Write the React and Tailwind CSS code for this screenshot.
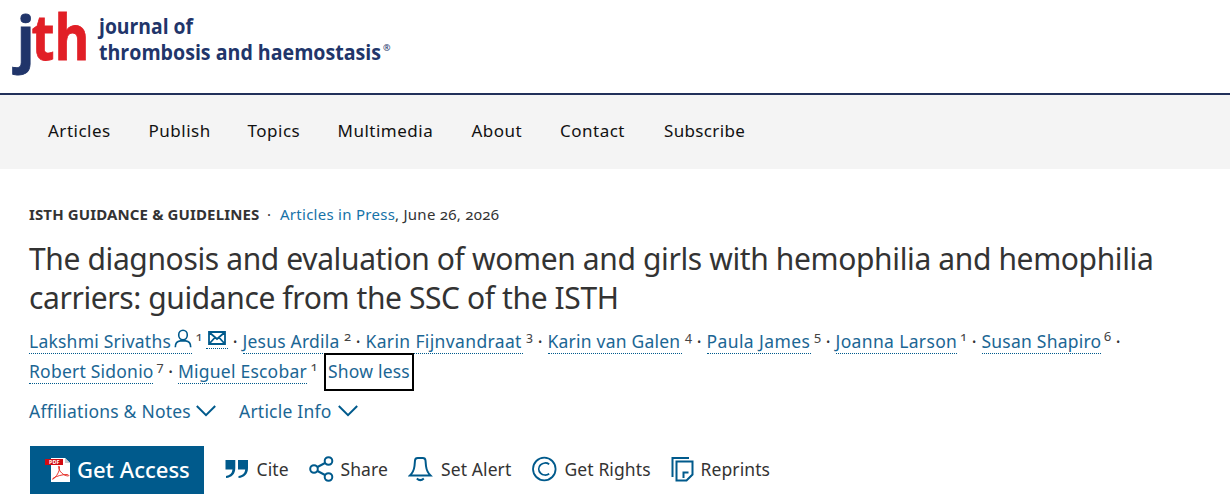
import React from 'react';

const navItems = [
    { label: 'Articles', className: 'w-[100.5px]' },
    { label: 'Publish', className: 'w-[99px]' },
    { label: 'Topics', className: 'w-[90px]' },
    { label: 'Multimedia', className: 'w-[134px]' },
    { label: 'About', className: 'w-[88.5px]' },
    { label: 'Contact', className: 'w-[104px]' },
    { label: 'Subscribe', className: 'w-[82px] tracking-[0.35px]' },
];

const authorRows = [
    [
        { name: 'Lakshmi Srivaths', note: '1', className: 'w-[163px]', corresponding: true },
        { name: 'Jesus Ardila', note: '2', className: 'w-[98px]' },
        { name: 'Karin Fijnvandraat', note: '3', className: 'w-[157px] tracking-[0.36px]' },
        { name: 'Karin van Galen', note: '4', className: 'w-[134px]' },
        { name: 'Paula James', note: '5', className: 'w-[104px] tracking-[0.4px]' },
        { name: 'Joanna Larson', note: '1', className: 'w-[121px] tracking-[0.35px]' },
        { name: 'Susan Shapiro', note: '6', className: 'w-[119px]' },
    ],
    [
        { name: 'Robert Sidonio', note: '7', className: 'w-[124px]' },
        { name: 'Miguel Escobar', note: '1', className: 'w-[129px]', last: true },
    ],
];

function Logo() {
    return (
        <svg className="overflow-visible" width="400" height="88" viewBox="0 0 400 88" fontFamily='"Open Sans", "Noto Sans", sans-serif' fontWeight="700">
            <text x="16.5" y="59.5" fontSize="60" fill="#21356a" stroke="#21356a" strokeWidth="0.8">j</text>
            <text x="31.5" y="59.5" fontSize="62" fill="#e11f26" stroke="#e11f26" strokeWidth="0.8" textLength="58" lengthAdjust="spacingAndGlyphs">th</text>
            <g fill="#21356a" fontSize="21.5">
                <text x="99" y="33.5" textLength="94" lengthAdjust="spacingAndGlyphs">journal of</text>
                <text x="99" y="59.5" textLength="282" lengthAdjust="spacingAndGlyphs">thrombosis and haemostasis</text>
                <text x="383" y="51" fontSize="9" fontWeight="600">®</text>
            </g>
        </svg>
    );
}

function PersonIcon() {
    return (
        <svg width="18" height="19" viewBox="0 0 18 19" fill="none" stroke="#005a8c" strokeWidth="1.6">
            <ellipse cx="9" cy="6" rx="4.300" ry="4.800" />
            <path d="M1.300 18.200c0-4 1.800-6 5-6.300h5.400c3.200.3 5 2.300 5 6.300" />
        </svg>
    );
}

function MailIcon() {
    return (
        <svg width="18" height="14" viewBox="0 0 18 14" fill="none" stroke="#005a8c" strokeWidth="1.8">
            <path d="M1 1h16v12H1zM1.500 1.500 9 8l7.500-6.500M1.500 12.500l5.500-6M16.500 12.500 11 6.500" />
        </svg>
    );
}

function Chevron() {
    return (
        <svg width="20" height="12" viewBox="0 0 20 12" fill="none" stroke="#005a8c" strokeWidth="2">
            <path d="M.8 1 10 10.200 19.200 1" />
        </svg>
    );
}

function PdfIcon() {
    return (
        <svg width="26" height="26" viewBox="0 0 26 26">
            <path d="M6 1h14l5 5v19H6z" fill="#fff" />
            <path d="M20 1v5h5z" fill="#c9cdd0" />
            <path d="M8 22c3-1.500 7-8 6.500-12-.2-1.500-1.500-1-1 .5 1 4 4.500 8 9.500 8.500 1.500 0 .5-1.500-1-1.500-5 0-10 1.500-13.500 3.500-1.500 1-1 1.700-.5 1z" fill="none" stroke="#e2231a" strokeWidth=".9" />
            <path d="M0 2h18v6H0z" fill="#d10a11" />
            <text x="4" y="7" fontSize="5.5" fontWeight="700" fontFamily='"Open Sans", sans-serif' fill="#fff">PDF</text>
        </svg>
    );
}

function CiteIcon() {
    return (
        <svg width="24" height="20" viewBox="0 0 24 20" fill="#005a8c">
            <path d="M.5 1h9.800v8c0 6-3.500 9.500-9.300 10v-2c3.800-.5 6-2.500 6.500-6.500h-7zM13 1h10v8c0 6-3.700 9.500-9.500 10v-2c3.900-.5 6.200-2.500 6.700-6.500H13z" />
        </svg>
    );
}

function ShareIcon() {
    return (
        <svg width="25" height="26" viewBox="0 0 25 26" fill="none" stroke="#005a8c" strokeWidth="2">
            <circle cx="5" cy="13" r="3.800" />
            <circle cx="19.500" cy="5" r="3.800" />
            <circle cx="19.500" cy="21" r="3.800" />
            <path d="M8.500 11 16 7M8.500 15l7.500 4" />
        </svg>
    );
}

function BellIcon() {
    return (
        <svg width="25" height="26" viewBox="0 0 25 26" fill="none" stroke="#005a8c" strokeWidth="2">
            <path d="M2 19.500C4.500 17 6 14 6.500 10L7 4.500Q7.200 2 9.700 2h5.100q2.500 0 2.700 2.500L18 10c.5 4 2 7 4.500 9.500z" />
            <path d="M8.800 22.500q3.500 3.200 7 0" />
        </svg>
    );
}

function RightsIcon() {
    return (
        <svg width="25" height="26" viewBox="0 0 25 26" fill="none" stroke="#005a8c" strokeWidth="1.8">
            <circle cx="12.300" cy="13" r="11.300" />
            <path d="M17.200 8.200a6.500 6 0 1 0 0 9.600" />
        </svg>
    );
}

function ReprintsIcon() {
    return (
        <svg width="23" height="26" viewBox="0 0 23 26" fill="none" stroke="#005a8c" strokeWidth="2">
            <path d="M1.500 21V2H18" />
            <path d="M5.500 5.500h16v13l-6 6h-10zM12.500 22v-5.500h5" />
        </svg>
    );
}

const actions = [
    { label: 'Cite', icon: CiteIcon, className: 'w-[84px]', iconClass: 'w-[31.5px]' },
    { label: 'Share', icon: ShareIcon, className: 'w-[99px]', iconClass: 'w-[31.5px]' },
    { label: 'Set Alert', icon: BellIcon, className: 'w-[124px]', iconClass: 'w-[33px]' },
    { label: 'Get Rights', icon: RightsIcon, className: 'w-[138.5px]', iconClass: 'w-[32.5px]' },
    { label: 'Reprints', icon: ReprintsIcon, className: 'w-[110px]', iconClass: 'w-[30px]' },
];

function Author({ author }) {
    return (
        <>
            <a className={`flex h-[26px] shrink-0 items-center justify-between border-b border-dotted border-[#005a8c] text-[#1b6694] ${author.className}`}>
                <span>{author.name}</span>
                {author.corresponding && <span className="-mt-1"><PersonIcon /></span>}
            </a>
            <sup className="top-0 ml-[3.5px] w-[7px] shrink-0 self-start text-[13px] leading-4 text-[#444] oldstyle-nums">{author.note}</sup>
            {author.corresponding && (
                <a className="ml-[3.5px] flex h-[21px] w-[22px] shrink-0 items-center justify-center self-start border-b border-dotted border-[#005a8c]">
                    <MailIcon />
                </a>
            )}
            {!author.last && <span className="w-[14.5px] shrink-0 text-center font-medium text-[#333]">·</span>}
        </>
    );
}

export default function App() {
    return (
        <div className="h-[502px] w-[1230px] overflow-hidden bg-white font-['Noto_Sans',sans-serif] whitespace-nowrap text-[#333]">
            <header className="h-[95px] border-b-2 border-[#21305a]">
                <Logo />
            </header>

            <nav className="flex h-[74px] items-center bg-[#f4f4f4] pb-[3px] pl-12 text-[17px] tracking-[0.5px] text-[#111]">
                {navItems.map((item) => (
                    <a key={item.label} className={item.className}>{item.label}</a>
                ))}
            </nav>

            <main className="pl-[29px]">
                <div className="mt-[34px] flex h-[22px] items-center text-[15px] tracking-[0.27px]">
                    <span className="w-[238px] font-bold tracking-[0.13px]">ISTH GUIDANCE &amp; GUIDELINES</span>
                    <span className="w-[13px]">·</span>
                    <span className="w-[115px] text-[#1672a8]">Articles in Press</span>
                    <span className="oldstyle-nums">, June 26, 2026</span>
                </div>

                <h1 className="mt-[14px] text-[30px] leading-[39px] tracking-[-0.37px]">
                    <span className="block">The diagnosis and evaluation of women and girls with hemophilia and hemophilia</span>
                    <span className="block tracking-[-0.4px]">carriers: guidance from the SSC of the ISTH</span>
                </h1>

                <div className="mt-[11px] text-[17.5px] tracking-[0.22px]">
                    {authorRows.map((row, index) => (
                        <div key={index} className="flex h-[30px] items-start leading-[26px]">
                            {row.map((author) => (
                                <Author key={author.name} author={author} />
                            ))}
                            {index === 1 && (
                                <button className="-mt-[5px] ml-[6.5px] h-[38px] w-[90px] border-2 border-black pb-[3px] tracking-[0.2px] text-[#1b6694]">Show less</button>
                            )}
                        </div>
                    ))}
                </div>

                <div className="mt-[8px] flex h-[30px] items-center text-[17.5px] tracking-[0.22px] text-[#1b6694]">
                    <span className="w-[167px]">Affiliations &amp; Notes</span>
                    <Chevron />
                    <span className="ml-[23px] w-[99px]">Article Info</span>
                    <Chevron />
                </div>

                <div className="mt-[20px] ml-px flex items-center text-[17.5px] tracking-[0.1px]">
                    <button className="flex h-12 w-[174px] items-center bg-[#005a8c] pb-px pl-[15px] text-[22px] font-medium tracking-normal text-white">
                        <PdfIcon />
                        <span className="-mt-px ml-[6px]">Get Access</span>
                    </button>
                    <div className="-mt-0.5 flex pl-[21px]">
                        {actions.map(({ label, icon: Icon, className, iconClass }) => (
                            <a key={label} className={`flex items-center ${className}`}>
                                <span className={`shrink-0 ${iconClass}`}><Icon /></span>
                                <span>{label}</span>
                            </a>
                        ))}
                    </div>
                </div>
            </main>
        </div>
    );
}
